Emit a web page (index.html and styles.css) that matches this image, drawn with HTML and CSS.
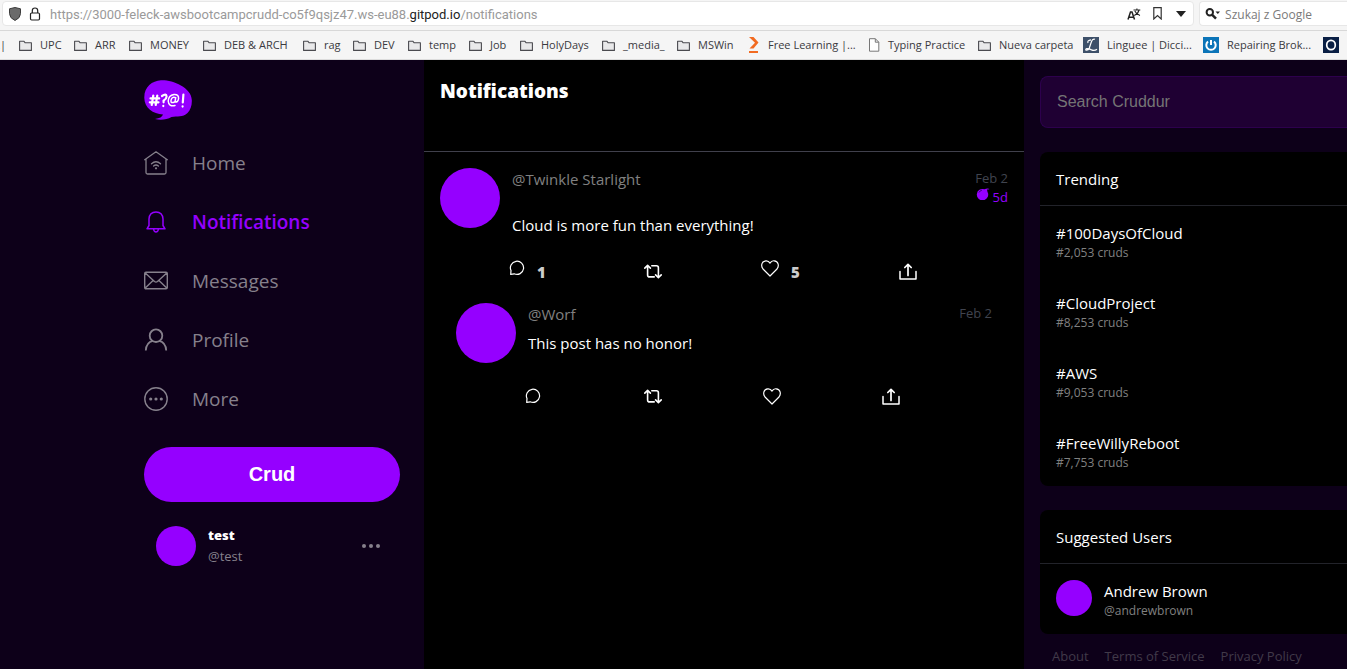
FILE: index.html
```html
<!DOCTYPE html>
<html lang="en">
<head>
<meta charset="utf-8">
<title>Cruddur</title>
<link rel="stylesheet" href="styles.css">
</head>
<body>
<svg class="sprite" aria-hidden="true">
  <symbol id="folder" viewBox="0 0 13 11"><path d="M.6 1.2h4.2l1.4 1.6h6.2v7.6H.6z" fill="#e9e9ea" stroke="#4a4a4f" stroke-width="1.1" stroke-linejoin="round"/></symbol>
  <symbol id="comment" viewBox="0 0 16 16"><path d="M1.7 14.4 2 10.6A6.6 6.6 0 1 1 5.2 13.8z" fill="none" stroke="currentColor" stroke-width="1.2" stroke-linejoin="round"/></symbol>
  <symbol id="repost" viewBox="0 0 18 16"><path d="M.8 4.6 3.6 1.8l2.8 2.8M3.6 2v9.4q0 2 2 2h4.600M17.200 11.400l-2.800 2.800-2.800-2.800M14.400 14V4.300q0-2-2-2H7.800" fill="none" stroke="currentColor" stroke-width="1.6" stroke-linecap="round" stroke-linejoin="round"/></symbol>
  <symbol id="heart" viewBox="0 0 18 17"><path d="M9 16 2 9C-.4 6 .6 1.200 4.800.8 6.800.6 8.200 1.700 9 3.100 9.800 1.700 11.200.6 13.200.8 17.400 1.200 18.400 6 16 9z" fill="none" stroke="currentColor" stroke-width="1.200" stroke-linejoin="round"/></symbol>
  <symbol id="share" viewBox="0 0 18 17"><path d="M1 8.400V16h16V8.400" fill="none" stroke="currentColor" stroke-width="1.500" stroke-linejoin="round" stroke-linecap="round"/><path d="M9 12.400V1.500M5.800 4.500 9 1.300l3.200 3.200" fill="none" stroke="currentColor" stroke-width="1.700" stroke-linecap="round" stroke-linejoin="round"/></symbol>
</svg>

<header class="browser">
  <div class="toolbar">
    <div class="address">
      <svg class="shield" viewBox="0 0 12 14"><path d="M6 .5 11.500 1.800V6.500Q11.500 11 6 13.500.5 11 .5 6.500V1.800z" fill="#6b6b6b" stroke="#3c3c3c"/></svg>
      <svg class="lock" viewBox="0 0 12 14"><rect x="1.500" y="6" width="9" height="7" rx="1.200" fill="none" stroke="#222" stroke-width="1.200"/><path d="M3.300 6V3.700a2.700 2.700 0 0 1 5.400 0V6" fill="none" stroke="#222" stroke-width="1.200"/></svg>
      <span class="url">https://3000-feleck-awsbootcampcrudd-co5f9qsjz47.ws-eu88.<span class="domain">gitpod.io</span>/notifications</span>
      <svg class="translate" viewBox="0 0 14 12"><path d="M1 11.500 3.500 4h1.500L7.500 11.500M2 9.200h4.500" fill="none" stroke="#222" stroke-width="1.500"/><path d="M6.500 2h6.800M9.900 .4V2M7.200 7.500Q11 6 12 2.200M7.800 3Q9.500 6.500 13 7.500" fill="none" stroke="#222" stroke-width="1.100"/></svg>
      <svg class="mark" viewBox="0 0 9 13"><path d="M.8.7h7.400v11.300L4.500 8.600.8 12z" fill="none" stroke="#333" stroke-width="1.200"/></svg>
      <svg class="caret" viewBox="0 0 10 6"><path d="M0 0h10L5 6z" fill="#222"/></svg>
    </div>
    <div class="websearch">
      <svg class="glass" viewBox="0 0 16 12"><circle cx="4.800" cy="4.300" r="3.200" fill="none" stroke="#222" stroke-width="2"/><path d="m7 6.700 4 4" stroke="#222" stroke-width="2.400"/><path d="M10.500 3.500H15L12.800 6z" fill="#222"/></svg>
      <input class="websearch-input" type="text" aria-label="Szukaj z Google" placeholder="Szukaj z Google">
    </div>
  </div>
  <nav class="bookmarks" aria-label="Bookmarks">
    <a href="#" class="bm bm-cut">X|</a>
    <a href="#" class="bm"><svg class="folder"><use href="#folder"/></svg>UPC</a>
    <a href="#" class="bm"><svg class="folder"><use href="#folder"/></svg>ARR</a>
    <a href="#" class="bm"><svg class="folder"><use href="#folder"/></svg>MONEY</a>
    <a href="#" class="bm"><svg class="folder"><use href="#folder"/></svg>DEB &amp; ARCH</a>
    <a href="#" class="bm"><svg class="folder"><use href="#folder"/></svg>rag</a>
    <a href="#" class="bm"><svg class="folder"><use href="#folder"/></svg>DEV</a>
    <a href="#" class="bm"><svg class="folder"><use href="#folder"/></svg>temp</a>
    <a href="#" class="bm"><svg class="folder"><use href="#folder"/></svg>Job</a>
    <a href="#" class="bm"><svg class="folder"><use href="#folder"/></svg>HolyDays</a>
    <a href="#" class="bm"><svg class="folder"><use href="#folder"/></svg>_media_</a>
    <a href="#" class="bm"><svg class="folder"><use href="#folder"/></svg>MSWin</a>
    <a href="#" class="bm"><svg class="packt" viewBox="0 0 12 16"><path d="M1 0h4.500l5 5.500L5.500 11.500H1.500L7 5.800z" fill="#f26b21"/><path d="M1 14h9v2H1z" fill="#f26b21"/></svg>Free Learning |...</a>
    <a href="#" class="bm"><svg class="page" viewBox="0 0 12 14"><path d="M1.500.7h5.800l3.500 3.500v9H1.500zM7.300.7v3.500h3.500" fill="#fff" stroke="#777"/></svg>Typing Practice</a>
    <a href="#" class="bm"><svg class="folder"><use href="#folder"/></svg>Nueva carpeta</a>
    <a href="#" class="bm"><svg class="site" viewBox="0 0 16 16"><path fill="#3d5069" d="M0 0h16v16H0z"/><path d="M12 2.300Q9.500 1.500 8.500 4.500L6.300 11Q5.300 13.600 3 13.200 2.200 12 4 11.600q2 0 4.500 1.300 3 1.200 5.500-.7M5 6Q4 3.500 8 2.800" fill="none" stroke="#fff" stroke-width="1.200"/></svg>Linguee | Dicci...</a>
    <a href="#" class="bm"><svg class="site" viewBox="0 0 16 16"><path fill="#0b74b8" d="M0 0h16v16H0z"/><path d="M5 4.500a4.700 4.700 0 1 0 6 0M8 3v5" fill="none" stroke="#fff" stroke-width="2"/></svg>Repairing Brok...</a>
    <a href="#" class="bm"><svg class="site" viewBox="0 0 16 16"><path fill="#0a1f44" d="M0 0h16v16H0z"/><ellipse cx="8" cy="8" rx="4.300" ry="4.700" fill="none" stroke="#fff" stroke-width="1.700"/></svg>I</a>
  </nav>
</header>

<div class="app">
  <aside class="sidebar">
    <svg class="logo" viewBox="0 0 48 40" role="img" aria-label="Cruddur"><path d="M17 .3C27-.5 47.500 7 47.800 20c.3 5-1.300 10-4.300 13-5 4.500-10 3-16 4C23 39.500 17 40.500 11 39q7-1 8-4.500C9 34 .5 28 .3 18 0 7 8 .8 17 .3z" fill="#9500ff"/><g fill="none" stroke="#fff" stroke-width="2.200" stroke-linecap="round"><path d="m9.300 15.500-1.600 9.500m5.600-9.500-1.600 9.500M6.500 18.400h8.700M5.800 22.300h8.700M18 16q4.300-3 4.600.5 0 2.200-3 4.200v1.600m-.3 3.600v.2M39.400 14.500l-.6 8m-.2 3.900v.2"/><path d="M30.500 22q-4 1.800-3.500-1.700.8-4 4.700-2.600L31 22q3 .5 3.600-3.500.2-4.300-4.600-4-5.500.8-5.800 6.500.4 5.800 6.800 4.500" stroke-width="1.500"/></g></svg>
    <nav class="menu">
      <a class="menu-item" href="#"><svg class="menu-icon" viewBox="0 0 24 24"><path d="M.7 8.700 12 .8l11.300 7.900M2 8v13.500q0 1.500 1.500 1.500h17q1.500 0 1.500-1.500V8M7.500 12.700q4.500-4 9 0M9.600 15q2.400-2 4.800 0" fill="none" stroke="currentColor" stroke-width="1.300" stroke-linecap="round" stroke-linejoin="round"/><circle cx="12" cy="17.300" r="1.100" fill="currentColor"/></svg>Home</a>
      <a class="menu-item active" href="#"><svg class="menu-icon" viewBox="0 0 24 24"><path d="M5 15.500V9Q5.500 2 12 2t7 7v6.500l2 3.300H3zM9.500 19q.5 3 2.500 3t2.500-3" fill="none" stroke="currentColor" stroke-width="1.500" stroke-linejoin="round"/></svg>Notifications</a>
      <a class="menu-item" href="#"><svg class="menu-icon" viewBox="0 0 24 24"><path d="M2 3.200h20q1.300 0 1.300 1.300v14q0 1.300-1.300 1.300H2Q.7 19.800.7 18.500v-14Q.7 3.200 2 3.200zM1 3.800l9.500 8.700q1.500 1.200 3 0L23 3.800M1 19.300l7.800-7.600M23 19.300l-7.800-7.600" fill="none" stroke="currentColor" stroke-width="1.400"/></svg>Messages</a>
      <a class="menu-item" href="#"><svg class="menu-icon" viewBox="0 0 24 24"><circle cx="12" cy="7.700" r="6.300" fill="none" stroke="currentColor" stroke-width="1.800"/><path d="M1.800 22.500q.4-8 7-9.600M22.200 22.500q-.4-8-7-9.600" fill="none" stroke="currentColor" stroke-width="1.800"/></svg>Profile</a>
      <a class="menu-item" href="#"><svg class="menu-icon" viewBox="0 0 24 24"><circle cx="12" cy="12" r="11.200" fill="none" stroke="currentColor" stroke-width="1.400"/><g fill="currentColor"><circle cx="6.700" cy="12" r="1.600"/><circle cx="12" cy="12" r="1.600"/><circle cx="17.300" cy="12" r="1.600"/></g></svg>More</a>
    </nav>
    <button class="crud" type="button">Crud</button>
    <div class="account">
      <span class="avatar avatar-m"></span>
      <div class="account-text"><span class="account-name">test</span><span class="account-handle">@test</span></div>
      <svg class="dots" viewBox="0 0 20 6"><g fill="currentColor"><circle cx="3" cy="3" r="2"/><circle cx="10" cy="3" r="2"/><circle cx="17" cy="3" r="2"/></g></svg>
    </div>
  </aside>

  <main class="feed">
    <h1 class="feed-title">Notifications</h1>
    <article class="post">
      <div class="post-head">
        <span class="avatar avatar-l"></span>
        <div class="post-text post-text-spaced"><span class="handle">@Twinkle Starlight</span><p class="message">Cloud is more fun than everything!</p></div>
        <div class="times"><time>Feb 2</time><span class="expires"><svg class="bomb" viewBox="0 0 14 12"><path d="M8.500 1.300 10 .8q2-.8 3.500.2-1.500.7-2.500.6l.5 2.300A5.700 5.700 0 1 1 8.500 1.300z" fill="currentColor"/><path d="M3 4.500q1-2 2.800-2.200" stroke="#3c0078" fill="none"/></svg>5d</span></div>
      </div>
      <div class="actions actions-counted">
        <button class="action raised" type="button" aria-label="Reply"><svg class="i16"><use href="#comment"/></svg><b>1</b></button>
        <button class="action" type="button" aria-label="Repost"><svg class="i18"><use href="#repost"/></svg></button>
        <button class="action raised" type="button" aria-label="Like"><svg class="i18"><use href="#heart"/></svg><b>5</b></button>
        <button class="action" type="button" aria-label="Share"><svg class="i18"><use href="#share"/></svg></button>
      </div>
    </article>
    <article class="post reply">
      <div class="post-head">
        <span class="avatar avatar-l"></span>
        <div class="post-text"><span class="handle">@Worf</span><p class="message">This post has no honor!</p></div>
        <div class="times"><time>Feb 2</time></div>
      </div>
      <div class="actions">
        <button class="action" type="button" aria-label="Reply"><svg class="i16"><use href="#comment"/></svg></button>
        <button class="action" type="button" aria-label="Repost"><svg class="i18"><use href="#repost"/></svg></button>
        <button class="action" type="button" aria-label="Like"><svg class="i18"><use href="#heart"/></svg></button>
        <button class="action" type="button" aria-label="Share"><svg class="i18"><use href="#share"/></svg></button>
      </div>
    </article>
  </main>

  <aside class="extras">
    <input class="search" type="text" aria-label="Search Cruddur" placeholder="Search Cruddur">
    <section class="card">
      <h2 class="card-title">Trending</h2>
      <div class="trend"><a class="strong" href="#">#100DaysOfCloud</a><span class="sub">#2,053 cruds</span></div>
      <div class="trend"><a class="strong" href="#">#CloudProject</a><span class="sub">#8,253 cruds</span></div>
      <div class="trend"><a class="strong" href="#">#AWS</a><span class="sub">#9,053 cruds</span></div>
      <div class="trend"><a class="strong" href="#">#FreeWillyReboot</a><span class="sub">#7,753 cruds</span></div>
    </section>
    <section class="card">
      <h2 class="card-title">Suggested Users</h2>
      <div class="user"><span class="avatar avatar-s"></span><div class="user-text"><a class="strong" href="#">Andrew Brown</a><span class="sub">@andrewbrown</span></div></div>
    </section>
    <footer class="links"><a href="#">About</a><a href="#">Terms of Service</a><a href="#">Privacy Policy</a></footer>
  </aside>
</div>
</body>
</html>
```

FILE: styles.css
```css
* { box-sizing: border-box; }
body {
  margin: 0;
  height: 100vh;
  display: flex;
  flex-direction: column;
  overflow: hidden;
  background: #0d0019;
  color: #fff;
  font-family: "Open Sans", "Noto Sans", sans-serif;
  font-size: 15px;
  line-height: 20px;
}
a { color: inherit; text-decoration: none; }
button { font: inherit; color: inherit; border: 0; padding: 0; background: none; }
svg { flex: none; display: block; }
.sprite { position: absolute; width: 0; height: 0; }

/* browser chrome */
.browser { flex: none; background: #f5f5f5; color: #3a3a3f; border-bottom: 1px solid #dcdcdc; overflow: hidden; }
.toolbar { display: flex; gap: 5px; height: 31px; padding: 1px 0 4px 2px; border-bottom: 1px solid #d8d8d8; }
.address, .websearch { display: flex; align-items: center; background: #fff; border: 1px solid #e7e7e7; border-radius: 4px; }
.address { flex: 1; min-width: 0; padding: 0 7px 0 6px; color: #9a9a9a; font: 13px/18px Roboto, "Open Sans", sans-serif; }
.shield { width: 12px; height: 14px; margin-right: 8px; }
.lock { width: 12px; height: 14px; margin-right: 9px; }
.url { flex: 1; min-width: 0; white-space: nowrap; overflow: hidden; padding-top: 2px; }
.domain { color: #222; }
.translate { width: 14px; height: 12px; margin-right: 12px; }
.mark { width: 9px; height: 13px; margin-right: 14px; }
.caret { width: 10px; height: 6px; }
.websearch { width: 11%; padding-left: 5px; border-radius: 4px 0 0 4px; border-right: 0; }
.glass { width: 16px; height: 12px; margin-right: 4px; }
.websearch-input { flex: 1; min-width: 0; border: 0; padding: 2px 0 0; outline: 0; background: none; font: 12px/16px "Open Sans", sans-serif; }
.websearch-input::placeholder { color: #7a7a7a; opacity: 1; }
.bookmarks {
  display: grid;
  grid-template-columns: 19px 55px 55px 74px 100px 50px 55px 61px 51px 82px 75px 71px 120px 110px 105px 120px 120px 60px;
  align-items: center;
  height: 28px;
  font-size: 11px;
  line-height: 16px;
}
.bm { display: flex; align-items: center; gap: 8px; white-space: nowrap; }
.bm-cut { justify-content: flex-end; padding-right: 13px; }
.folder { width: 13px; height: 11px; }
.packt { width: 12px; height: 16px; }
.page { width: 12px; height: 14px; }
.site { width: 16px; height: 16px; }

/* layout */
.app { flex: 1; min-height: 0; display: grid; grid-template-columns: 424px minmax(0, 600px) minmax(0, 1fr); }
.avatar { flex: none; border-radius: 50%; background: #9500ff; }
.avatar-s { width: 36px; height: 36px; }
.avatar-m { width: 40px; height: 40px; }
.avatar-l { width: 60px; height: 60px; }

/* sidebar */
.sidebar { padding: 20px 24px 0 144px; }
.logo { width: 48px; height: 40px; }
.menu { display: flex; flex-direction: column; padding: 13px 0 19px; }
.menu-item { display: flex; align-items: center; gap: 24px; height: 59px; color: #86808c; font-size: 19px; }
.menu-item.active { color: #9500ff; font-weight: 600; }
.menu-icon { width: 24px; height: 24px; }
.crud { display: block; width: 100%; height: 55px; border-radius: 28px; background: #9500ff; font: bold 20px "Liberation Sans", Arial, sans-serif; }
.account { display: flex; align-items: center; gap: 12px; padding: 23px 19px 0 12px; }
.account-text { flex: 1; display: flex; flex-direction: column; font-size: 13px; line-height: 21px; }
.account-name { font-weight: 800; }
.account-handle { color: #86808c; }
.dots { width: 20px; height: 6px; color: #86808c; }

/* feed */
.feed { background: #000; }
.feed-title { margin: 0; height: 92px; padding: 20px 16px; border-bottom: 1px solid #40404c; font-size: 19px; line-height: 22px; font-weight: 800; }
.post { padding: 16px 16px 0; }
.post-head { display: flex; gap: 12px; }
.post-text { flex: 1; display: flex; flex-direction: column; gap: 9px; padding-top: 1px; }
.post-text-spaced { gap: 26px; }
.handle { color: #808080; }
.message { margin: 0; }
.times { display: flex; flex-direction: column; align-items: flex-end; padding-top: 1px; color: #40444f; font-size: 13px; line-height: 19px; }
.expires { display: flex; gap: 3px; color: #9500ff; }
.bomb { width: 14px; height: 12px; }
.actions { display: grid; grid-template-columns: repeat(4, 119px); height: 18px; margin: 24px 0 0 69px; align-items: center; }
.actions-counted { grid-template-columns: 135px 117px 138px 60px; margin-top: 26px; }
.action { display: flex; align-items: center; gap: 12px; color: #fff; }
.action b { color: #ccc; font-weight: 800; font-size: 15px; line-height: 18px; padding-top: 3px; }
.raised { align-items: flex-start; margin-top: -1px; }
.i16 { width: 16px; height: 16px; }
.i18 { width: 18px; height: 17px; }
.reply { padding: 24px 32px 0; }

/* right column */
.extras { padding: 16px 0 0 16px; }
.search { display: block; width: 100%; height: 52px; padding: 0 16px; border: 1px solid #2d004d; border-right: 0; border-radius: 8px 0 0 8px; background: #1f0033; color: #fff; font: 16px "Liberation Sans", Arial, sans-serif; }
.search::placeholder { color: #757575; opacity: 1; }
.card { margin-top: 24px; background: #000; border-radius: 8px 0 0 8px; }
.card-title { margin: 0; padding: 18px 16px 16px; border-bottom: 1px solid #22232a; font-size: 15px; line-height: 19px; font-weight: 400; }
.trend { display: flex; flex-direction: column; height: 70px; padding-top: 17px; padding-left: 16px; }
.strong { font-weight: 400; line-height: 20px; }
.sub { color: #808080; font-size: 12px; line-height: 19px; }
.user { display: flex; gap: 12px; height: 70px; padding: 16px; }
.user-text { display: flex; flex-direction: column; }
.user-text .strong { padding-top: 1px; }
.links { display: flex; gap: 16px; padding: 12px; color: #413a49; font-size: 13px; }
```
